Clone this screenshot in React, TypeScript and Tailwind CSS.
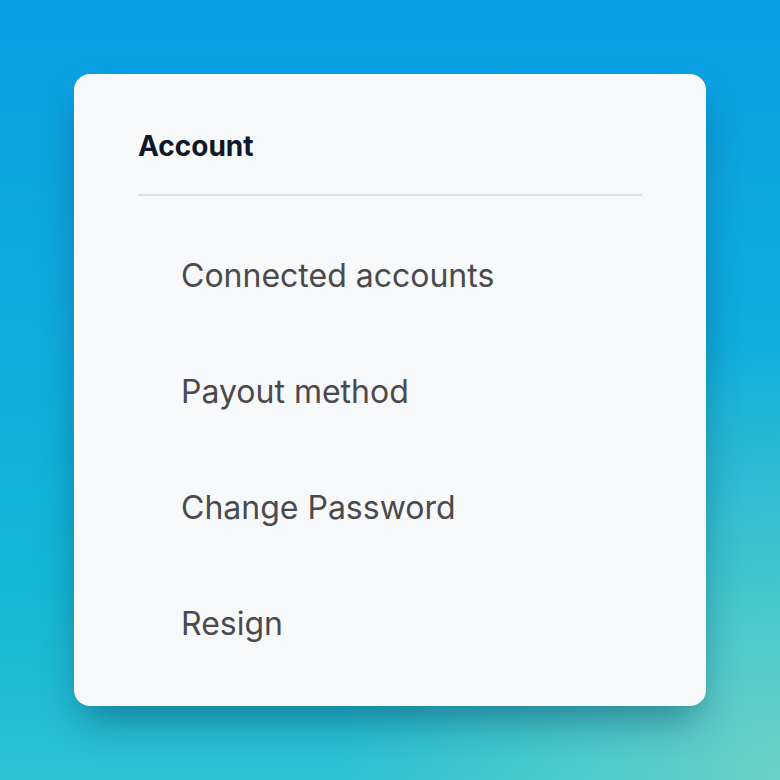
export default function App() {
  const items = ['Connected accounts', 'Payout method', 'Change Password', 'Resign'];

  return (
    <div
      className="w-[780px] h-[780px] flex items-center justify-center bg-[radial-gradient(circle_at_100%_100%,#68d2c6_0%,rgba(104,210,198,0)_40%),linear-gradient(to_bottom,#0a9fe6,#13b6d6_75%,#2cc2d3)]"
      style={{ fontFamily: 'Inter, "Noto Sans", sans-serif' }}
    >
      <div className="w-[632px] h-[632px] bg-[#f7f8fa] rounded-2xl shadow-[0_20px_40px_-8px_rgba(0,40,70,0.45)] px-16 pt-[56px]">
        <div className="pb-[32px] border-b-2 border-[#dedfe2]">
          <h2 className="text-[28px] leading-8 font-bold text-[#0f172a]">Account</h2>
        </div>
        <ul className="mt-[22px]">
          {items.map((item) => (
            <li key={item} className="h-[116px] flex items-center pl-[43px] text-[32px] text-[#4a4a4d]">
              {item}
            </li>
          ))}
        </ul>
      </div>
    </div>
  );
}
